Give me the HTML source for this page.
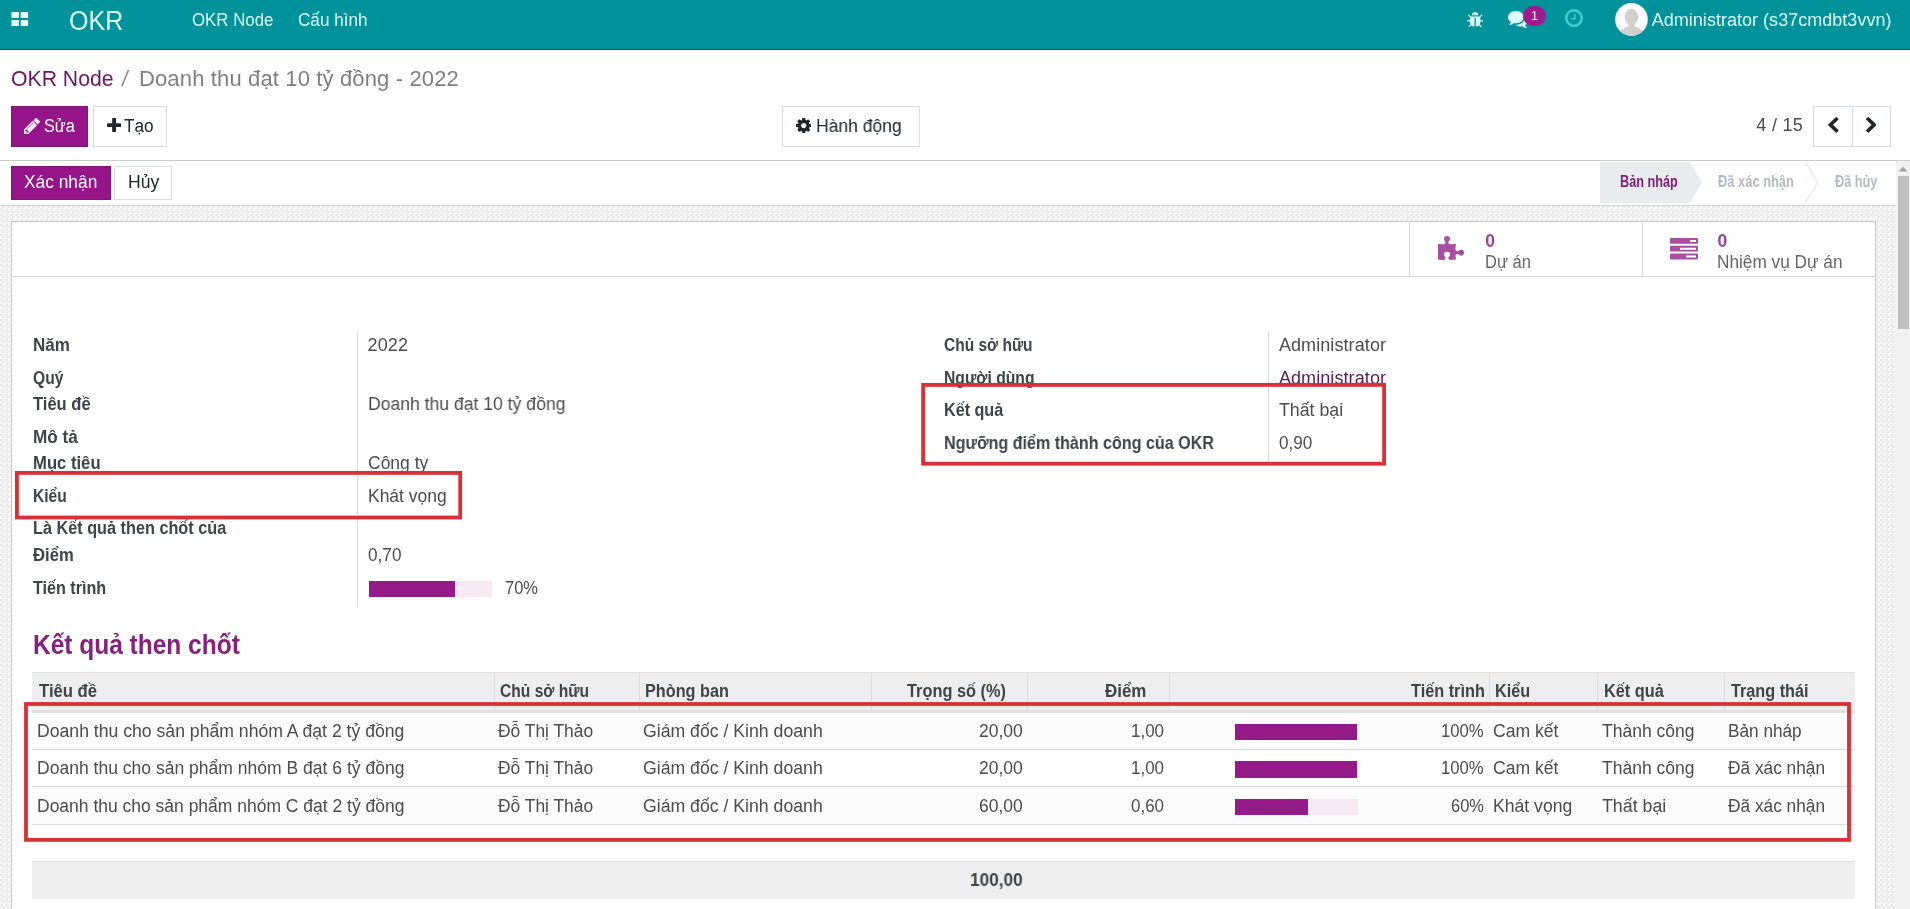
<!DOCTYPE html>
<html lang="vi"><head><meta charset="utf-8"><title>Doanh thu đạt 10 tỷ đồng - 2022 - OKR</title>
<style>
*{box-sizing:border-box;margin:0;padding:0}
html,body{width:1910px;height:909px;overflow:hidden;background:#fff;font-family:"Liberation Sans",sans-serif;}
body{position:relative}
.a{position:absolute}
#texts{will-change:transform}
.t{position:absolute;white-space:nowrap;line-height:1;font-family:"Liberation Sans",sans-serif}
#nav{left:0;top:0;width:1910px;height:50px;background:#00929a;border-bottom:1px solid #04525a}
#cp{left:0;top:50px;width:1910px;height:111px;background:#fff;border-bottom:1px solid #cbcccd}
#sb{left:0;top:161px;width:1896px;height:45px;background:#fff;border-bottom:1px solid #d2d3d4}
#bg{left:0;top:206px;width:1896px;height:703px;background:repeating-conic-gradient(#eaeaea 0% 25%,#f8f8f8 0% 50%) 0 0/5px 5px}
#scroll{left:1896px;top:161px;width:14px;height:748px;background:#f1f1f1}
#thumb{left:1898px;top:176px;width:11px;height:153px;background:#c1c1c1}
#sheet{left:11px;top:221px;width:1865px;height:700px;background:#fff;border:1px solid #c6c7c8}
.btn{border:1px solid #dcdfe2;background:#fff}
.btnp{background:#96148a;border:1px solid #7d1574}
.vline{width:1px;background:#dcdcdc}
.hline{height:1px;background:#dcdcdc}
.bar{background:#f7e9f3}
.bar i{display:block;height:100%;background:#931a87}

</style></head>
<body>
<div id="nav" class="a"></div>
<svg class="a" style="left:11px;top:12px" width="18" height="14" viewBox="0 0 18 14"><g fill="#eaffff"><rect x="0.5" y="0" width="7.4" height="6"/><rect x="9.7" y="0" width="7.4" height="6"/><rect x="0.5" y="8" width="7.4" height="6"/><rect x="9.7" y="8" width="7.4" height="6"/></g></svg>
<div id="cp" class="a"></div>
<div id="sb" class="a"></div>
<div id="bg" class="a"></div>
<div id="scroll" class="a"></div>
<div id="thumb" class="a"></div>
<svg class="a" style="left:1898px;top:166px" width="10" height="6" viewBox="0 0 10 6"><path d="M0.5 5.5 L5 0.8 L9.5 5.5 Z" fill="#a3a3a3"/></svg>
<div id="sheet" class="a"></div>

<!-- control panel buttons -->
<div class="a btnp" style="left:11px;top:106px;width:77px;height:41px"></div>
<div class="a btn" style="left:93px;top:106px;width:74px;height:41px"></div>
<div class="a btn" style="left:782px;top:106px;width:138px;height:41px"></div>
<div class="a btn" style="left:1813px;top:106px;width:78px;height:41px"></div>
<div class="a vline" style="left:1852px;top:106px;height:41px;background:#dcdfe2"></div>
<div class="a btnp" style="left:11px;top:166px;width:100px;height:34px"></div>
<div class="a btn" style="left:114px;top:166px;width:58px;height:34px"></div>

<!-- status bar -->
<svg class="a" style="left:1600px;top:162px" width="300" height="41" viewBox="0 0 300 41">
<path d="M0 0 H90 L102 20.5 L90 41 H0 Z" fill="#e9ecef"/>
<path d="M205.5 0 L217.5 20.5 L205.5 41" fill="none" stroke="#dfe2e5" stroke-width="1"/>
</svg>

<!-- button box -->
<div class="a hline" style="left:12px;top:276px;width:1863px;background:#d3d6d9"></div>
<div class="a vline" style="left:1409px;top:222px;height:54px"></div>
<div class="a vline" style="left:1642px;top:222px;height:54px"></div>

<!-- group dividers -->
<div class="a vline" style="left:357px;top:332px;height:275px"></div>
<div class="a vline" style="left:1268px;top:332px;height:130px"></div>

<!-- progress -->
<div class="a bar" style="left:369px;top:581px;width:123px;height:16px"><i style="width:86px"></i></div>

<!-- table -->
<div class="a" style="left:32px;top:672px;width:1823px;height:41px;background:#eeeeee;border-top:1px solid #e2e2e2;border-bottom:3px solid #dfe2e4"></div>
<div class="a vline" style="left:494px;top:672px;height:40px"></div>
<div class="a vline" style="left:639px;top:672px;height:40px"></div>
<div class="a vline" style="left:871px;top:672px;height:40px"></div>
<div class="a vline" style="left:1027px;top:672px;height:40px"></div>
<div class="a vline" style="left:1169px;top:672px;height:40px"></div>
<div class="a vline" style="left:1489px;top:672px;height:40px"></div>
<div class="a vline" style="left:1597px;top:672px;height:40px"></div>
<div class="a vline" style="left:1724px;top:672px;height:40px"></div>
<div class="a" style="left:32px;top:713px;width:1823px;height:36px;background:#fbfbfb"></div>
<div class="a" style="left:32px;top:787px;width:1823px;height:37px;background:#fbfbfb"></div>
<div class="a hline" style="left:32px;top:749px;width:1823px"></div>
<div class="a hline" style="left:32px;top:786px;width:1823px"></div>
<div class="a hline" style="left:32px;top:824px;width:1823px"></div>
<div class="a bar" style="left:1235px;top:724px;width:122.5px;height:16px"><i style="width:122px"></i></div>
<div class="a bar" style="left:1235px;top:761px;width:122.5px;height:17px"><i style="width:122px"></i></div>
<div class="a bar" style="left:1235px;top:799px;width:122.5px;height:16px"><i style="width:73px"></i></div>
<div class="a" style="left:32px;top:861px;width:1823px;height:38px;background:#eeeeee;border-top:1px solid #e0e0e0"></div>


<svg class="a" style="left:23.80px;top:118.00px" width="15.80" height="16.00" viewBox="128 149 1515 1515" preserveAspectRatio="none"><path d="M491 1536l91-91-235-235-91 91v107h128v128h107zm523-928q0-22-22-22-10 0-17 7l-542 542q-7 7-7 17 0 22 22 22 10 0 17-7l542-542q7-7 7-17zm-54-192l416 416-832 832h-416v-416zm683 96q0 53-37 90l-166 166-416-416 166-165q36-38 90-38 53 0 91 38l235 234q37 39 37 91z" fill="#ffe9ff"/></svg>
<svg class="a" style="left:106.80px;top:118.00px" width="14.20" height="14.10" viewBox="192 128 1408 1408" preserveAspectRatio="none"><path d="M1600 736v192q0 40-28 68t-68 28h-416v416q0 40-28 68t-68 28h-192q-40 0-68-28t-28-68v-416h-416q-40 0-68-28t-28-68v-192q0-40 28-68t68-28h416v-416q0-40 28-68t68-28h192q40 0 68 28t28 68v416h416q40 0 68 28t28 68z" fill="#212529"/></svg>
<svg class="a" style="left:795.60px;top:118.00px" width="15.50" height="15.20" viewBox="128 128 1536 1536" preserveAspectRatio="none"><path d="M1152 896q0-106-75-181t-181-75-181 75-75 181 75 181 181 75 181-75 75-181zm512-109v222q0 12-8 23t-20 13l-185 28q-19 54-39 91 35 50 107 138 10 12 10 25t-9 23q-27 37-99 108t-94 71q-12 0-26-9l-138-108q-44 23-91 38-16 136-29 186-7 28-36 28h-222q-14 0-24.500-8.500t-11.500-21.500l-28-184q-49-16-90-37l-141 107q-10 9-25 9-14 0-25-11-126-114-165-168-7-10-7-23 0-12 8-23 15-21 51-66.500t54-70.500q-27-50-41-99l-183-27q-13-2-21-12.500t-8-23.500v-222q0-12 8-23t19-13l186-28q14-46 39-92-40-57-107-138-10-12-10-24 0-10 9-23 26-36 98.500-107.500t94.500-71.500q13 0 26 10l138 107q44-23 91-38 16-136 29-186 7-28 36-28h222q14 0 24.500 8.500t11.500 21.500l28 184q49 16 90 37l142-107q9-9 24-9 13 0 25 10 129 119 165 170 7 8 7 22 0 12-8 23-15 21-51 66.500t-54 70.500q26 50 41 98l183 28q13 2 21 12.500t8 23.500z" fill="#212529"/></svg>
<svg class="a" style="left:1828.30px;top:117.30px" width="10.60" height="15.70" viewBox="410 26 1036 1612" preserveAspectRatio="none"><path d="M1427 301l-531 531 531 531q19 19 19 45t-19 45l-166 166q-19 19-45 19t-45-19l-742-742q-19-19-19-45t19-45l742-742q19-19 45-19t45 19l166 166q19 19 19 45t-19 45z" fill="#212529"/></svg>
<svg class="a" style="left:1865.80px;top:117.30px" width="10.50" height="15.70" viewBox="346 26 1036 1612" preserveAspectRatio="none"><path d="M1363 877l-742 742q-19 19-45 19t-45-19l-166-166q-19-19-19-45t19-45l531-531-531-531q-19-19-19-45t19-45l166-166q19-19 45-19t45 19l742 742q19 19 19 45t-19 45z" fill="#212529"/></svg>
<svg class="a" style="left:1466.70px;top:11.50px" width="16.30" height="15.50" viewBox="96 64 1600 1568" preserveAspectRatio="none"><path d="M1696 960q0 26-19 45t-45 19h-224q0 171-67 290l208 209q19 19 19 45t-19 45q-18 19-45 19t-45-19l-198-197q-5 5-15 13t-42 28.500-65 36.500-82 29-97 13v-896h-128v896q-51 0-101.500-13.500t-87-33-66-39-43.500-32.500l-15-14-183 207q-20 21-48 21-24 0-43-16-19-18-20.500-44.500t15.500-46.500l202-227q-58-114-58-274h-224q-26 0-45-19t-19-45 19-45 45-19h224v-294l-173-173q-19-19-19-45t19-45 45-19 45 19l173 173h844l173-173q19-19 45-19t45 19 19 45-19 45l-173 173v294h224q26 0 45 19t19 45zm-480-576h-640q0-133 93.500-226.500t226.500-93.500 226.500 93.500 93.500 226.500z" fill="#dcffff"/></svg>
<svg class="a" style="left:1508.00px;top:10.50px" width="20.00" height="17.00" viewBox="0 256 1792 1408.11" preserveAspectRatio="none"><path d="M1408 768q0 139-94 257t-256.500 186.500-353.500 68.500q-86 0-176-16-124 88-278 128-36 9-86 16h-3q-11 0-20.500-8t-11.500-21q-1-3-1-6.500t.5-6.500 2-6l2.500-5 3.500-5.500 4-5 4.500-5 4-4.500q5-6 23-25t26-29.500 22.500-29 25-38.500 20.500-44q-124-72-195-177t-71-224q0-139 94-257t256.500-186.500 353.500-68.500 353.500 68.500 256.500 186.500 94 257zm384 256q0 120-71 224.500t-195 176.500q10 24 20.500 44t25 38.500 22.500 29 26 29.500 23 25q1 1 4 4.500t4.500 5 4 5 3.500 5.500l2.500 5 2 6 .5 6.500-1 6.500q-3 14-13 22t-22 7q-50-7-86-16-154-40-278-128-90 16-176 16-271 0-472-132 58 4 88 4 161 0 309-45t264-129q125-92 192-212t67-254q0-77-23-152 129 71 204 178t75 230z" fill="#dcffff"/></svg>
<svg class="a" style="left:1564.90px;top:9.40px" width="18.00" height="18.10" viewBox="128 128 1536 1536" preserveAspectRatio="none"><path d="M1024 544v448q0 14-9 23t-23 9h-320q-14 0-23-9t-9-23v-64q0-14 9-23t23-9h224v-352q0-14 9-23t23-9h64q14 0 23 9t9 23zm416 352q0-148-73-273t-198-198-273-73-273 73-198 198-73 273 73 273 198 198 273 73 273-73 198-198 73-273zm224 0q0 209-103 385.500t-279.500 279.500-385.500 103-385.500-103-279.500-279.500-103-385.500 103-385.500 279.500-279.500 385.500-103 385.500 103 279.500 279.500 103 385.500z" fill="#38ccd5"/></svg>
<svg class="a" style="left:1438.00px;top:236.00px" width="26.00" height="24.00" viewBox="64 0 1664 1572" preserveAspectRatio="none"><path d="M1728 1098q0 81-44.500 135t-123.500 54q-41 0-77.500-17.500t-59-38-56.500-38-71-17.500q-110 0-110 124 0 39 16 115t15 115v5q-22 0-33 1-34 3-97.500 11.500t-115.500 13.500-98 5q-61 0-103-26.500t-42-83.500q0-37 17.500-71t38-56.500 38-59 17.500-77.500q0-79-54-123.500t-135-44.500q-84 0-143 45.500t-59 127.500q0 43 15 83t33.500 64.500 33.500 53 15 50.500q0 45-46 89-37 35-117 35-95 0-245-24-9-2-27.500-4t-27.500-4l-13-2q-1 0-3-1-2 0-2-1v-1024q2 1 17.500 3.500t34 5 21.500 3.500q150 24 245 24 80 0 117-35 46-44 46-89 0-22-15-50.500t-33.500-53-33.500-64.500-15-83q0-82 59-127.500t144-45.500q80 0 134 44.500t54 123.500q0 41-17.500 77.500t-38 59-38 56.500-17.500 71q0 57 42 83.500t103 26.500q64 0 180-15t163-17v2q-1 2-3.500 17.500t-5 34-3.500 21.500q-24 150-24 245 0 80 35 117 44 46 89 46 22 0 50.500-15t53-33.500 64.500-33.500 83-15q82 0 127.500 59t45.500 143z" fill="#a94fa1"/></svg>
<svg class="a" style="left:1670.00px;top:238.30px" width="28.00" height="21.40" viewBox="0 128 1792 1408" preserveAspectRatio="none"><path d="M1024 1408h640v-128h-640v128zm-384-512h1024v-128h-1024v128zm640-512h384v-128h-384v128zm512 832v256q0 26-19 45t-45 19h-1664q-26 0-45-19t-19-45v-256q0-26 19-45t45-19h1664q26 0 45 19t19 45zm0-512v256q0 26-19 45t-45 19h-1664q-26 0-45-19t-19-45v-256q0-26 19-45t45-19h1664q26 0 45 19t19 45zm0-512v256q0 26-19 45t-45 19h-1664q-26 0-45-19t-19-45v-256q0-26 19-45t45-19h1664q26 0 45 19t19 45z" fill="#a94fa1"/></svg>
<div class="a" style="left:1523px;top:5.5px;width:22.6px;height:20px;border-radius:10px;background:#a01a8e"></div>
<svg class="a" style="left:1615px;top:2.5px" width="33" height="33" viewBox="0 0 33 33"><defs><clipPath id="avc"><circle cx="16.5" cy="16.4" r="16.3"/></clipPath></defs><circle cx="16.5" cy="16.4" r="16.3" fill="#fdfdfd"/><g clip-path="url(#avc)" fill="#d3cfcf"><ellipse cx="16.5" cy="14" rx="6.7" ry="8.3"/><path d="M5 33 C5 26.5 9 24.6 13.5 23.6 L13.5 20 H19.5 L19.5 23.6 C24 24.6 28 26.5 28 33 Z"/></g></svg>

<div id="texts">
<span class="t" id="t0" style="left:68.50px;top:8.00px;font-size:27.00px;color:#dcffff;transform:scaleX(0.9272);transform-origin:0 0;">OKR</span>
<span class="t" id="t1" style="left:192.39px;top:11.00px;font-size:18.00px;color:#dcffff;transform:scaleX(0.9357);transform-origin:0 0;">OKR Node</span>
<span class="t" id="t2" style="left:297.77px;top:11.00px;font-size:18.00px;color:#dcffff;transform:scaleX(0.9510);transform-origin:0 0;">Cấu hình</span>
<span class="t" id="t3" style="left:1651.72px;top:11.00px;font-size:18.00px;color:#dcffff;letter-spacing:0.025px;">Administrator (s37cmdbt3vvn)</span>
<span class="t" id="t4" style="left:1530.95px;top:10.00px;font-size:12.50px;color:#ffffff;">1</span>
<span class="t" id="t5" style="left:11.03px;top:68.00px;font-size:22.00px;color:#6c1664;transform:scaleX(0.9637);transform-origin:0 0;">OKR Node</span>
<span class="t" id="t6" style="left:121.68px;top:68.00px;font-size:22.00px;color:#8a8a8a;transform:skewX(-8deg);">/</span>
<span class="t" id="t7" style="left:138.98px;top:68.00px;font-size:22.00px;color:#7f7f7f;letter-spacing:0.141px;">Doanh thu đạt 10 tỷ đồng - 2022</span>
<span class="t" id="t8" style="left:44.22px;top:117.00px;font-size:18.00px;color:#ffffff;transform:scaleX(0.9035);transform-origin:0 0;">Sửa</span>
<span class="t" id="t9" style="left:124.27px;top:117.00px;font-size:18.00px;color:#212529;transform:scaleX(0.9569);transform-origin:0 0;">Tạo</span>
<span class="t" id="t10" style="left:815.95px;top:117.00px;font-size:18.00px;color:#212529;transform:scaleX(0.9733);transform-origin:0 0;">Hành động</span>
<span class="t" id="t11" style="left:1756.32px;top:116.00px;font-size:18.00px;color:#4c4c4c;letter-spacing:0.307px;">4 / 15</span>
<span class="t" id="t12" style="left:23.96px;top:173.00px;font-size:18.00px;color:#ffffff;transform:scaleX(0.9638);transform-origin:0 0;">Xác nhận</span>
<span class="t" id="t13" style="left:127.94px;top:173.00px;font-size:18.00px;color:#212529;transform:scaleX(0.9788);transform-origin:0 0;">Hủy</span>
<span class="t" id="t14" style="left:1620.35px;top:174.00px;font-size:15.80px;color:#841a7a;font-weight:bold;transform:scaleX(0.8030);transform-origin:0 0;">Bản nháp</span>
<span class="t" id="t15" style="left:1718.14px;top:174.00px;font-size:15.80px;color:#b3bac1;font-weight:bold;transform:scaleX(0.8156);transform-origin:0 0;">Đã xác nhận</span>
<span class="t" id="t16" style="left:1834.55px;top:174.00px;font-size:15.80px;color:#b3bac1;font-weight:bold;transform:scaleX(0.8048);transform-origin:0 0;">Đã hủy</span>
<span class="t" id="t17" style="left:1485.35px;top:233.00px;font-size:17.50px;color:#9a4592;font-weight:bold;">0</span>
<span class="t" id="t18" style="left:1484.91px;top:253.00px;font-size:18.00px;color:#666666;transform:scaleX(0.9169);transform-origin:0 0;">Dự án</span>
<span class="t" id="t19" style="left:1717.45px;top:233.00px;font-size:17.50px;color:#9a4592;font-weight:bold;">0</span>
<span class="t" id="t20" style="left:1716.97px;top:253.00px;font-size:18.00px;color:#666666;transform:scaleX(0.9572);transform-origin:0 0;">Nhiệm vụ Dự án</span>
<span class="t" id="t21" style="left:33.26px;top:336.00px;font-size:18.00px;color:#3f444a;font-weight:bold;transform:scaleX(0.9456);transform-origin:0 0;">Năm</span>
<span class="t" id="t22" style="left:33.29px;top:369.00px;font-size:18.00px;color:#3f444a;font-weight:bold;transform:scaleX(0.8710);transform-origin:0 0;">Quý</span>
<span class="t" id="t23" style="left:33.27px;top:395.00px;font-size:18.00px;color:#3f444a;font-weight:bold;transform:scaleX(0.9198);transform-origin:0 0;">Tiêu đề</span>
<span class="t" id="t24" style="left:33.26px;top:428.00px;font-size:18.00px;color:#3f444a;font-weight:bold;transform:scaleX(0.9532);transform-origin:0 0;">Mô tả</span>
<span class="t" id="t25" style="left:33.27px;top:454.00px;font-size:18.00px;color:#3f444a;font-weight:bold;transform:scaleX(0.9254);transform-origin:0 0;">Mục tiêu</span>
<span class="t" id="t26" style="left:33.29px;top:487.00px;font-size:18.00px;color:#3f444a;font-weight:bold;transform:scaleX(0.8634);transform-origin:0 0;">Kiểu</span>
<span class="t" id="t27" style="left:33.27px;top:519.00px;font-size:18.00px;color:#3f444a;font-weight:bold;transform:scaleX(0.9028);transform-origin:0 0;">Là Kết quả then chốt của</span>
<span class="t" id="t28" style="left:33.27px;top:546.00px;font-size:18.00px;color:#3f444a;font-weight:bold;transform:scaleX(0.9239);transform-origin:0 0;">Điểm</span>
<span class="t" id="t29" style="left:33.28px;top:579.00px;font-size:18.00px;color:#3f444a;font-weight:bold;transform:scaleX(0.8954);transform-origin:0 0;">Tiến trình</span>
<span class="t" id="t30" style="left:367.52px;top:336.00px;font-size:18.00px;color:#4c4c4c;letter-spacing:0.144px;">2022</span>
<span class="t" id="t31" style="left:367.55px;top:395.00px;font-size:18.00px;color:#4c4c4c;transform:scaleX(0.9766);transform-origin:0 0;">Doanh thu đạt 10 tỷ đồng</span>
<span class="t" id="t32" style="left:367.55px;top:454.00px;font-size:18.00px;color:#4c4c4c;transform:scaleX(0.9722);transform-origin:0 0;">Công ty</span>
<span class="t" id="t33" style="left:367.85px;top:487.00px;font-size:18.00px;color:#4c4c4c;transform:scaleX(0.9699);transform-origin:0 0;">Khát vọng</span>
<span class="t" id="t34" style="left:367.57px;top:546.00px;font-size:18.00px;color:#4c4c4c;transform:scaleX(0.9556);transform-origin:0 0;">0,70</span>
<span class="t" id="t35" style="left:505.41px;top:579.00px;font-size:18.00px;color:#4c4c4c;transform:scaleX(0.9163);transform-origin:0 0;">70%</span>
<span class="t" id="t36" style="left:944.29px;top:336.00px;font-size:18.00px;color:#3f444a;font-weight:bold;transform:scaleX(0.8615);transform-origin:0 0;">Chủ sở hữu</span>
<span class="t" id="t37" style="left:944.29px;top:369.00px;font-size:18.00px;color:#3f444a;font-weight:bold;transform:scaleX(0.8717);transform-origin:0 0;">Người dùng</span>
<span class="t" id="t38" style="left:944.28px;top:401.00px;font-size:18.00px;color:#3f444a;font-weight:bold;transform:scaleX(0.8972);transform-origin:0 0;">Kết quả</span>
<span class="t" id="t39" style="left:944.28px;top:434.00px;font-size:18.00px;color:#3f444a;font-weight:bold;transform:scaleX(0.8946);transform-origin:0 0;">Ngưỡng điểm thành công của OKR</span>
<span class="t" id="t40" style="left:1278.92px;top:336.00px;font-size:18.00px;color:#4c4c4c;letter-spacing:0.087px;">Administrator</span>
<span class="t" id="t41" style="left:1278.92px;top:369.00px;font-size:18.00px;color:#5e1a62;letter-spacing:0.087px;">Administrator</span>
<span class="t" id="t42" style="left:1278.93px;top:401.00px;font-size:18.00px;color:#4c4c4c;transform:scaleX(0.9863);transform-origin:0 0;">Thất bại</span>
<span class="t" id="t43" style="left:1278.97px;top:434.00px;font-size:18.00px;color:#4c4c4c;transform:scaleX(0.9496);transform-origin:0 0;">0,90</span>
<span class="t" id="t44" style="left:33.41px;top:632.00px;font-size:27.00px;color:#86207f;font-weight:bold;transform:scaleX(0.9071);transform-origin:0 0;">Kết quả then chốt</span>
<span class="t" id="t45" style="left:39.07px;top:682.00px;font-size:18.00px;color:#3f444a;font-weight:bold;transform:scaleX(0.9263);transform-origin:0 0;">Tiêu đề</span>
<span class="t" id="t46" style="left:499.99px;top:682.00px;font-size:18.00px;color:#3f444a;font-weight:bold;transform:scaleX(0.8664);transform-origin:0 0;">Chủ sở hữu</span>
<span class="t" id="t47" style="left:645.08px;top:682.00px;font-size:18.00px;color:#3f444a;font-weight:bold;transform:scaleX(0.9026);transform-origin:0 0;">Phòng ban</span>
<span class="t" id="t48" style="left:906.87px;top:682.00px;font-size:18.00px;color:#3f444a;font-weight:bold;transform:scaleX(0.9077);transform-origin:0 0;">Trọng số (%)</span>
<span class="t" id="t49" style="left:1105.46px;top:682.00px;font-size:18.00px;color:#3f444a;font-weight:bold;transform:scaleX(0.9402);transform-origin:0 0;">Điểm</span>
<span class="t" id="t50" style="left:1410.77px;top:682.00px;font-size:18.00px;color:#3f444a;font-weight:bold;transform:scaleX(0.9041);transform-origin:0 0;">Tiến trình</span>
<span class="t" id="t51" style="left:1494.98px;top:682.00px;font-size:18.00px;color:#3f444a;font-weight:bold;transform:scaleX(0.8979);transform-origin:0 0;">Kiểu</span>
<span class="t" id="t52" style="left:1603.87px;top:682.00px;font-size:18.00px;color:#3f444a;font-weight:bold;transform:scaleX(0.9065);transform-origin:0 0;">Kết quả</span>
<span class="t" id="t53" style="left:1730.68px;top:682.00px;font-size:18.00px;color:#3f444a;font-weight:bold;transform:scaleX(0.9014);transform-origin:0 0;">Trạng thái</span>
<span class="t" id="t54" style="left:36.94px;top:722.00px;font-size:18.00px;color:#4c4c4c;transform:scaleX(0.9791);transform-origin:0 0;">Doanh thu cho sản phẩm nhóm A đạt 2 tỷ đồng</span>
<span class="t" id="t55" style="left:497.76px;top:722.00px;font-size:18.00px;color:#4c4c4c;transform:scaleX(0.9665);transform-origin:0 0;">Đỗ Thị Thảo</span>
<span class="t" id="t56" style="left:642.94px;top:722.00px;font-size:18.00px;color:#4c4c4c;transform:scaleX(0.9815);transform-origin:0 0;">Giám đốc / Kinh doanh</span>
<span class="t" id="t57" style="left:979.05px;top:722.00px;font-size:18.00px;color:#4c4c4c;transform:scaleX(0.9729);transform-origin:0 0;">20,00</span>
<span class="t" id="t58" style="left:1130.88px;top:722.00px;font-size:18.00px;color:#4c4c4c;transform:scaleX(0.9435);transform-origin:0 0;">1,00</span>
<span class="t" id="t59" style="left:1440.90px;top:722.00px;font-size:18.00px;color:#4c4c4c;transform:scaleX(0.9259);transform-origin:0 0;">100%</span>
<span class="t" id="t60" style="left:1493.15px;top:722.00px;font-size:18.00px;color:#4c4c4c;transform:scaleX(0.9762);transform-origin:0 0;">Cam kết</span>
<span class="t" id="t61" style="left:1602.15px;top:722.00px;font-size:18.00px;color:#4c4c4c;transform:scaleX(0.9742);transform-origin:0 0;">Thành công</span>
<span class="t" id="t62" style="left:1728.27px;top:722.00px;font-size:18.00px;color:#4c4c4c;transform:scaleX(0.9561);transform-origin:0 0;">Bản nháp</span>
<span class="t" id="t63" style="left:36.95px;top:759.00px;font-size:18.00px;color:#4c4c4c;transform:scaleX(0.9739);transform-origin:0 0;">Doanh thu cho sản phẩm nhóm B đạt 6 tỷ đồng</span>
<span class="t" id="t64" style="left:497.76px;top:759.00px;font-size:18.00px;color:#4c4c4c;transform:scaleX(0.9665);transform-origin:0 0;">Đỗ Thị Thảo</span>
<span class="t" id="t65" style="left:642.94px;top:759.00px;font-size:18.00px;color:#4c4c4c;transform:scaleX(0.9815);transform-origin:0 0;">Giám đốc / Kinh doanh</span>
<span class="t" id="t66" style="left:979.05px;top:759.00px;font-size:18.00px;color:#4c4c4c;transform:scaleX(0.9729);transform-origin:0 0;">20,00</span>
<span class="t" id="t67" style="left:1130.88px;top:759.00px;font-size:18.00px;color:#4c4c4c;transform:scaleX(0.9435);transform-origin:0 0;">1,00</span>
<span class="t" id="t68" style="left:1440.90px;top:759.00px;font-size:18.00px;color:#4c4c4c;transform:scaleX(0.9259);transform-origin:0 0;">100%</span>
<span class="t" id="t69" style="left:1493.15px;top:759.00px;font-size:18.00px;color:#4c4c4c;transform:scaleX(0.9762);transform-origin:0 0;">Cam kết</span>
<span class="t" id="t70" style="left:1602.15px;top:759.00px;font-size:18.00px;color:#4c4c4c;transform:scaleX(0.9742);transform-origin:0 0;">Thành công</span>
<span class="t" id="t71" style="left:1728.26px;top:759.00px;font-size:18.00px;color:#4c4c4c;transform:scaleX(0.9607);transform-origin:0 0;">Đã xác nhận</span>
<span class="t" id="t72" style="left:36.95px;top:797.00px;font-size:18.00px;color:#4c4c4c;transform:scaleX(0.9714);transform-origin:0 0;">Doanh thu cho sản phẩm nhóm C đạt 2 tỷ đồng</span>
<span class="t" id="t73" style="left:497.76px;top:797.00px;font-size:18.00px;color:#4c4c4c;transform:scaleX(0.9665);transform-origin:0 0;">Đỗ Thị Thảo</span>
<span class="t" id="t74" style="left:642.94px;top:797.00px;font-size:18.00px;color:#4c4c4c;transform:scaleX(0.9815);transform-origin:0 0;">Giám đốc / Kinh doanh</span>
<span class="t" id="t75" style="left:979.05px;top:797.00px;font-size:18.00px;color:#4c4c4c;transform:scaleX(0.9729);transform-origin:0 0;">60,00</span>
<span class="t" id="t76" style="left:1130.88px;top:797.00px;font-size:18.00px;color:#4c4c4c;transform:scaleX(0.9435);transform-origin:0 0;">0,60</span>
<span class="t" id="t77" style="left:1450.51px;top:797.00px;font-size:18.00px;color:#4c4c4c;transform:scaleX(0.9163);transform-origin:0 0;">60%</span>
<span class="t" id="t78" style="left:1493.14px;top:797.00px;font-size:18.00px;color:#4c4c4c;transform:scaleX(0.9775);transform-origin:0 0;">Khát vọng</span>
<span class="t" id="t79" style="left:1602.13px;top:797.00px;font-size:18.00px;color:#4c4c4c;transform:scaleX(0.9878);transform-origin:0 0;">Thất bại</span>
<span class="t" id="t80" style="left:1728.26px;top:797.00px;font-size:18.00px;color:#4c4c4c;transform:scaleX(0.9607);transform-origin:0 0;">Đã xác nhận</span>
<span class="t" id="t81" style="left:970.16px;top:871.00px;font-size:18.00px;color:#3f444a;font-weight:bold;transform:scaleX(0.9572);transform-origin:0 0;">100,00</span>
</div>
<svg class="a" style="left:0;top:0;pointer-events:none" width="1910" height="909" viewBox="0 0 1910 909" fill="none" stroke="#da2f34" stroke-width="3.8">
<rect x="16.9" y="472.9" width="443.3" height="44.6"/>
<rect x="923.1" y="384.9" width="461" height="78.8"/>
<rect x="26" y="704" width="1823" height="135.9"/>
</svg>
</body></html>
